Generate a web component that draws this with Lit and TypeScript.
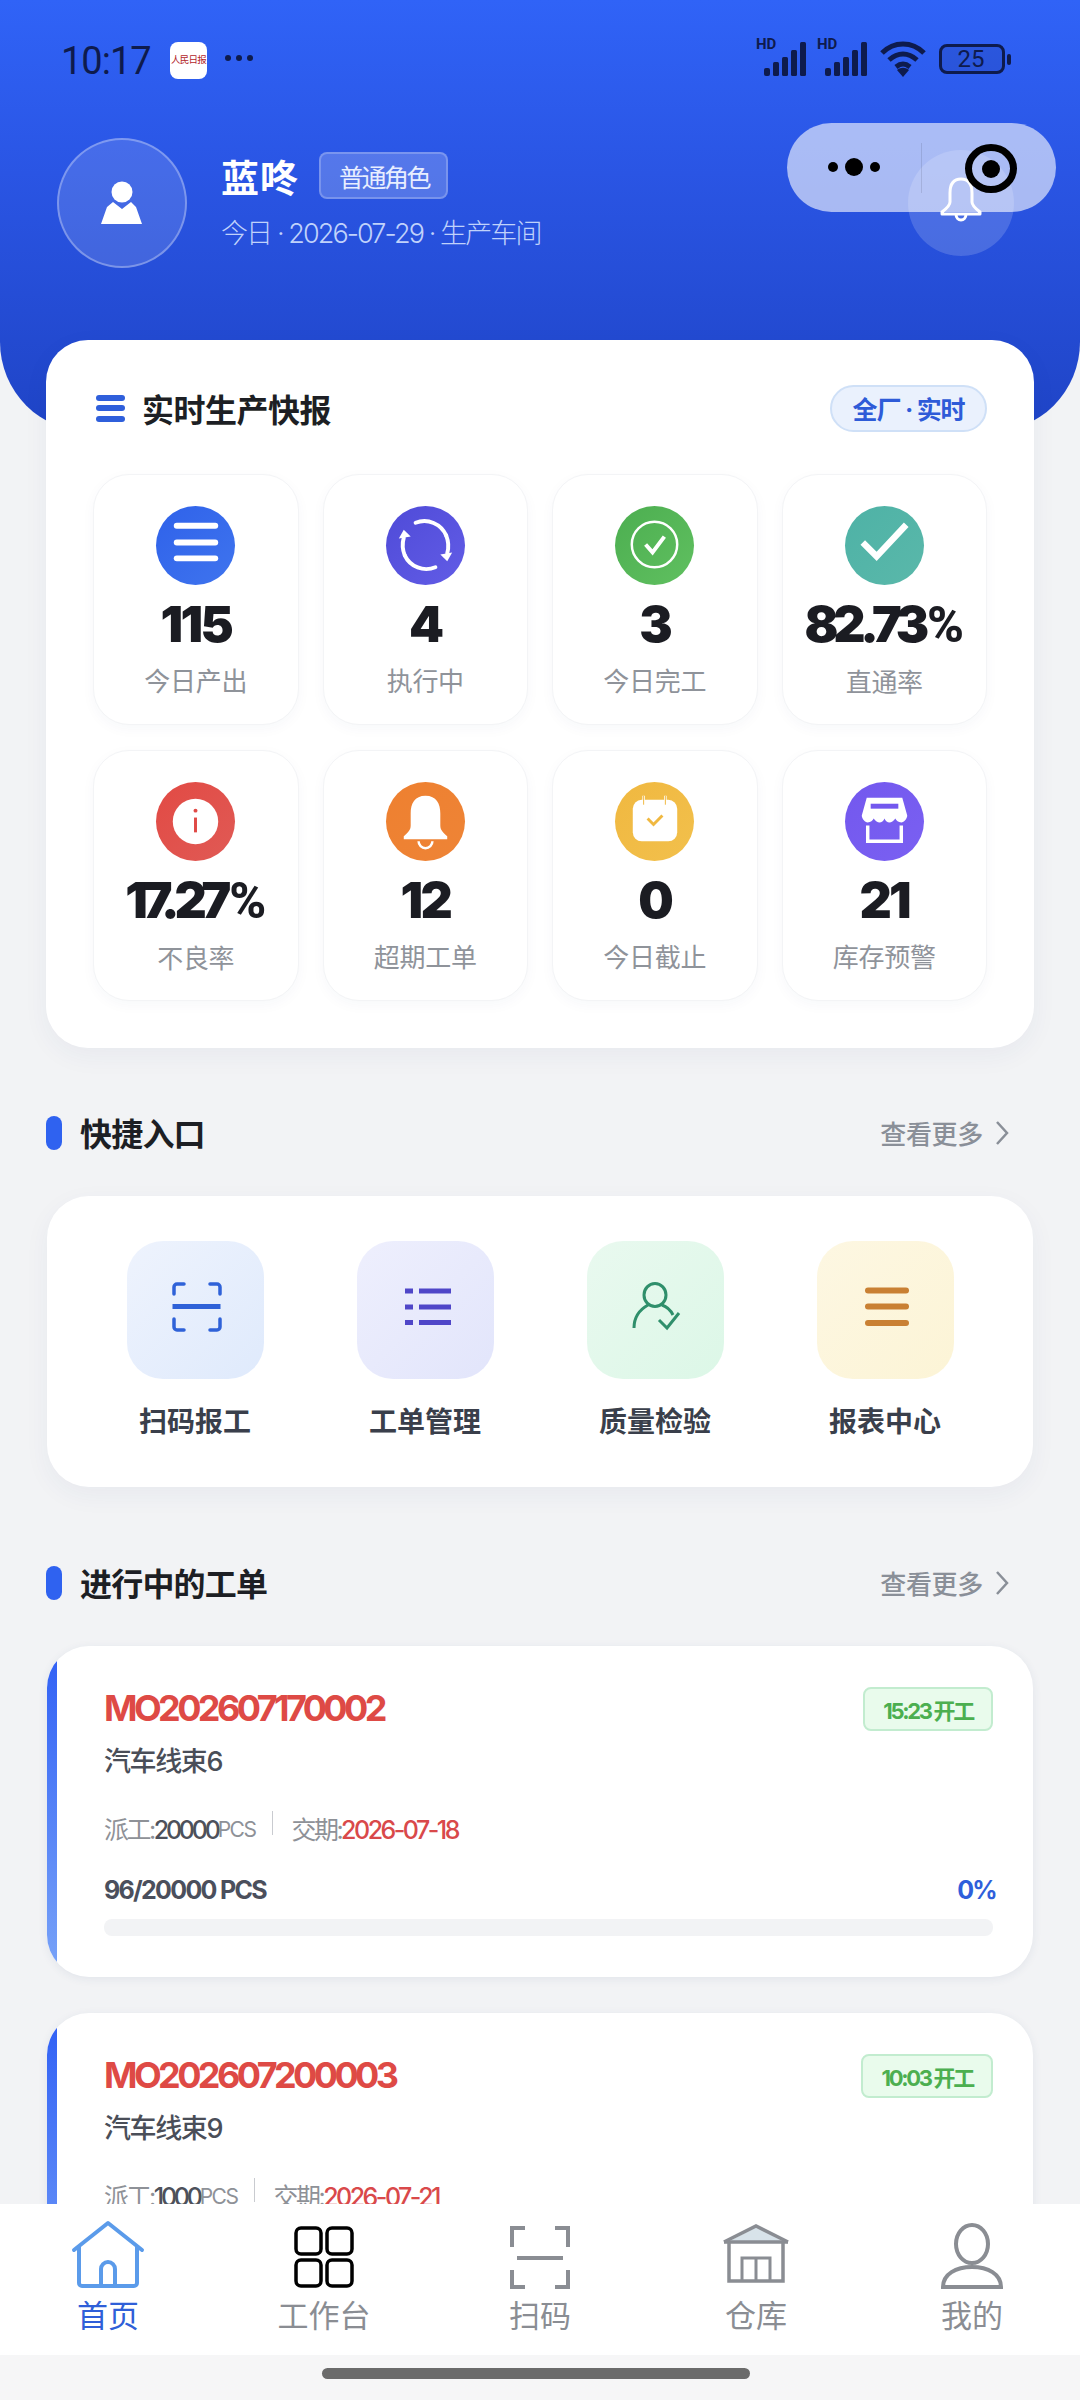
import { LitElement, html, css, svg } from "lit";
import { customElement } from "lit/decorators.js";

const W = (inner: unknown) => html`<svg class="ic" viewBox="0 0 80 80">${inner}</svg>`;

const metrics = [
  { v: "115", l: "今日产出", bg: "linear-gradient(135deg,#2f62ea,#3f74ee)", i: W(svg`<g fill="#fff"><rect x="18" y="17" width="45" height="6" rx="3"/><rect x="18" y="34" width="45" height="6" rx="3"/><rect x="18" y="50" width="45" height="6" rx="3"/></g>`) },
  { v: "4", l: "执行中", bg: "linear-gradient(135deg,#4f4bd8,#625ce6)", i: W(svg`<g fill="none" stroke="#fff" stroke-width="4" stroke-linecap="round"><path d="M30 17A24 24 0 0 1 61 30"/><path d="M50 62A24 24 0 0 1 19 50"/><path d="M18 32C16 39 17 45 19 50" /><path d="M62 48C64 41 63 35 61 30"/></g><g fill="#fff"><path d="M13 33l5-9 7 7z"/><path d="M67 47l-5 9-7-7z"/></g>`) },
  { v: "3", l: "今日完工", bg: "linear-gradient(135deg,#4cae50,#60c060)", i: W(svg`<circle cx="40" cy="39" r="23" fill="none" stroke="#fff" stroke-width="2.5"/><path d="M31 39l7 8 12-16" fill="none" stroke="#fff" stroke-width="4"/>`) },
  { v: "82.73%", l: "直通率", bg: "linear-gradient(135deg,#4eb2a6,#5ab8aa)", i: W(svg`<path d="M18 37l14 14 30-32" fill="none" stroke="#fff" stroke-width="6.5"/>`) },
  { v: "17.27%", l: "不良率", bg: "linear-gradient(135deg,#e24a44,#e05a55)", i: W(svg`<circle cx="40" cy="40" r="23" fill="#fff"/><rect x="38.500" y="36" width="3" height="15" fill="#e04a46"/><circle cx="40" cy="29" r="2" fill="#e04a46"/>`) },
  { v: "12", l: "超期工单", bg: "linear-gradient(135deg,#ee8030,#ee8436)", i: W(svg`<path fill="#fff" d="M40 14c-11 0-15 8-15 18v12c0 5-3 7-7 11v3h44v-3c-4-4-7-6-7-11V32c0-10-4-18-15-18z"/><path fill="none" stroke="#fff" stroke-width="2.5" d="M33 60a7 7 0 0 0 14 0"/>`) },
  { v: "0", l: "今日截止", bg: "linear-gradient(135deg,#f0b840,#f2c04c)", i: W(svg`<rect x="18" y="18" width="45" height="42" rx="9" fill="#fff"/><path d="M29 14v9M51 14v9" stroke="#fff" stroke-width="2.5"/><path d="M29 14v9M51 14v9" stroke="#f0b840" stroke-width="1" /><path d="M33 37l6 6 9-9" fill="none" stroke="#f0b840" stroke-width="3"/>`) },
  { v: "21", l: "库存预警", bg: "linear-gradient(135deg,#7358ee,#7a60f2)", i: W(svg`<path fill="none" stroke="#fff" stroke-width="3.5" d="M23 44v16h34V44"/><path fill="#fff" d="M22 16h36l5 18c0 3-3 7-6 7-3 0-5-2-6-4-2 3-4 4-6 4s-4-1-5-4c-1 3-3 4-5 4s-4-1-6-4c-1 2-3 4-6 4-3 0-6-4-6-7z"/><rect x="26" y="22" width="28" height="5" fill="#7358ee"/>`) },
];

const T = (inner: unknown) => html`<svg class="qic" viewBox="0 0 137 138">${inner}</svg>`;
const quick = [
  { l: "扫码报工", bg: "linear-gradient(135deg,#eef3fd,#dfeafc)", i: T(svg`<g fill="none" stroke="#2f62d8" stroke-width="3.5" stroke-linecap="round"><path d="M47 53v-7a3 3 0 0 1 3-3h7M83 43h7a3 3 0 0 1 3 3v7M47 78v8a3 3 0 0 0 3 3h7M83 89h7a3 3 0 0 0 3-3v-8"/></g><rect x="45.500" y="63" width="48" height="5" fill="#2f62d8"/>`) },
  { l: "工单管理", bg: "linear-gradient(135deg,#eeeffd,#e2e5fb)", i: T(svg`<g fill="#4f46c8"><rect x="48" y="47.500" width="8" height="5"/><rect x="62" y="47.500" width="32" height="5"/><rect x="48" y="63.500" width="8" height="5"/><rect x="62" y="63.500" width="32" height="5"/><rect x="48" y="79" width="8" height="5"/><rect x="62" y="79" width="32" height="5"/></g>`) },
  { l: "质量检验", bg: "linear-gradient(135deg,#e9f9ef,#dcf7e7)", i: T(svg`<g fill="none" stroke="#2f8f6b" stroke-width="3"><ellipse cx="68" cy="54" rx="11" ry="11.500"/><path d="M47 87c0-10 5-18 14-23M75 64c6 2 9 6 11 10"/><path d="M72 79l8 8 12-15"/></g>`) },
  { l: "报表中心", bg: "linear-gradient(135deg,#fdf7e2,#fcf4d6)", i: T(svg`<g fill="#c98033"><rect x="48" y="46.500" width="44" height="6" rx="3"/><rect x="48" y="62.500" width="44" height="6" rx="3"/><rect x="48" y="79" width="44" height="6" rx="3"/></g>`) },
];

const orders = [
  { no: "MO202607170002", name: "汽车线束6", tag: "15:23 开工", qty: "20000", due: "2026-07-18", prog: "96/20000 PCS", pct: "0%" },
  { no: "MO202607200003", name: "汽车线束9", tag: "10:03 开工", qty: "1000", due: "2026-07-21", prog: "", pct: "0%" },
];

const N = (inner: unknown) => html`<svg class="nic" viewBox="0 0 100 72">${inner}</svg>`;
const nav = [
  { l: "首页", on: true, i: N(svg`<g fill="none" stroke="#5b9bea" stroke-width="4" stroke-linejoin="round" stroke-linecap="round"><path d="M16 30L50 3L84 30"/><path d="M21 27v36a3 3 0 0 0 3 3h52a3 3 0 0 0 3-3V27"/><path d="M43 66V49a7 7 0 0 1 14 0v17"/></g>`) },
  { l: "工作台", on: false, i: N(svg`<g fill="none" stroke="#000" stroke-width="3.5"><rect x="22" y="8" width="25" height="26" rx="5"/><rect x="53" y="8" width="25" height="26" rx="5"/><rect x="22" y="40" width="25" height="26" rx="5"/><rect x="53" y="40" width="25" height="26" rx="5"/></g>`) },
  { l: "扫码", on: false, i: N(svg`<g fill="none" stroke="#8a8d93" stroke-width="4"><path d="M22 27V8h13M65 8h13v19M22 50v17h13M65 67h13V50"/><path d="M27 38h46"/></g>`) },
  { l: "仓库", on: false, i: N(svg`<path d="M24 21L50 7l26 14" fill="#d8e3ea"/><g fill="none" stroke="#8a8d93" stroke-width="3.500"><path d="M18 22L50 6l32 16"/><path d="M18 22h64"/><path d="M23 22v39h54V22"/><path d="M36 61V38h28v23M50 38v23" stroke-width="3"/></g>`) },
  { l: "我的", on: false, i: N(svg`<g fill="none" stroke="#8a8d93" stroke-width="4"><ellipse cx="50" cy="24" rx="16" ry="19"/><path d="M21 67c0-13 13-20 29-20s29 7 29 20z"/></g>`) },
];

const Signal = () => html`<span class="sig"><i>HD</i><svg viewBox="0 0 48 34" width="48" height="34"><g fill="#0e1b4d"><rect x="0" y="26" width="6" height="8" rx="2"/><rect x="9" y="20" width="6" height="14" rx="1.500"/><rect x="18" y="15" width="6" height="19" rx="1.500"/><rect x="27" y="8" width="6" height="26" rx="1.500"/><rect x="36" y="0" width="6" height="34" rx="1.500"/></g></svg></span>`;

@customElement("app-root")
export class AppRoot extends LitElement {
  static styles = css`
    :host { display: block; width: 1080px; height: 2400px; position: relative; overflow: hidden; background: #f2f3f5;
      font-family: Inter, "Noto Sans CJK SC", sans-serif; color: #1c1f26; }
    * { box-sizing: border-box; }
    svg { display: block; }
    .hero { height: 432px; background: linear-gradient(180deg,#3063f7 0%,#2a55e4 40%,#1f44c6 100%); border-radius: 0 0 90px 90px; }
    .status { height: 124px; padding: 38px 18px 0 61px; display: flex; align-items: flex-start; color: #0e1b4d; }
    .time { font: 400 38px/46px Roboto, sans-serif; width: 109px; letter-spacing: -1px; }
    .logo { width: 37px; height: 37px; margin-top: 4px; background: #fff; border-radius: 8px; color: #b3262a; font: 400 9.500px/35px "Noto Sans CJK SC", serif; text-align: center; white-space: nowrap; overflow: hidden; letter-spacing: -.8px; }
    .more { margin: 8px 0 0 18px; display: flex; gap: 5px; padding-top: 9px; }
    .more i { width: 6px; height: 6px; border-radius: 50%; background: #0e1b4d; }
    .sbr { margin-left: auto; display: flex; align-items: center; gap: 13px; padding-top: 2px; margin-right: 57px; }
    .sig { position: relative; display: block; width: 48px; height: 34px; }
    .sig svg { margin-left: 6px; }
    .sig i { position: absolute; left: -2px; top: -5px; font: 700 15px/15px Roboto, sans-serif; font-style: normal; }
    .batt { width: 66px; height: 30px; border: 3px solid #0e1b4d; border-radius: 8px; font: 400 24px/24px Roboto, sans-serif; text-align: center; position: relative; padding-right: 2px; background: rgba(14,27,77,.12); }
    .batt:after { content: ""; position: absolute; right: -9px; top: 7px; width: 4px; height: 11px; background: #0e1b4d; border-radius: 2px; }
    .profile { display: flex; padding-left: 57px; align-items: center; height: 130px; margin-top: 14px; }
    .avatar { width: 130px; height: 130px; border-radius: 50%; background: rgba(255,255,255,.13); border: 2px solid rgba(255,255,255,.3); display: flex; align-items: center; justify-content: center; margin-right: 35px; }
    .who { display: flex; flex-direction: column; gap: 12px; color: #fff; margin-top: -4px; }
    .nameRow { display: flex; align-items: center; gap: 20px; height: 48px; }
    .name { font-size: 38px; font-weight: 700; letter-spacing: 1px; margin-left: -1px; }
    .role { height: 47px; padding: 0 17px 0 18px; display: flex; align-items: center; font-size: 25px; border: 2px solid rgba(255,255,255,.22); background: rgba(255,255,255,.2); border-radius: 8px; color: #e8eeff; letter-spacing: -2.500px; }
    .sub { font-size: 27px; color: #c0d2fb; letter-spacing: -1.900px; font-weight: 300; margin-left: -1px; }
    .bell { position: absolute; left: 908px; top: 150px; width: 106px; height: 106px; border-radius: 50%; background: rgba(255,255,255,.16); display: flex; align-items: center; justify-content: center; padding-bottom: 8px; }
    .capsule { position: absolute; left: 787px; top: 123px; width: 269px; height: 89px; border-radius: 45px; background: rgba(255,255,255,.6); display: flex; align-items: center; }
    .caps-dots { width: 134px; display: flex; justify-content: center; align-items: center; gap: 7px; margin-top: -2px; }
    .caps-dots i { border-radius: 50%; background: #000; width: 10px; height: 10px; }
    .caps-dots i.mid { width: 18px; height: 18px; }
    .caps-div { width: 1px; height: 50px; background: rgba(0,0,0,.1); }
    .target { position: absolute; left: 178px; top: 21px; width: 52px; height: 49px; border: 7px solid #000; border-radius: 50%; display: flex; align-items: center; justify-content: center; }
    .target i { width: 18px; height: 18px; border-radius: 50%; background: #000; }

    main { margin-top: -92px; padding: 0 46px 0 46px; display: flex; flex-direction: column; }
    .panel { background: #fff; border-radius: 42px; box-shadow: 0 8px 26px rgba(40,60,110,.05); }
    .stats { height: 708px; padding: 46px 47px 0; }
    .shead { display: flex; align-items: center; height: 44px; }
    .menu { width: 29px; height: 27px; margin-left: 3px; display: flex; flex-direction: column; justify-content: space-between; margin-right: 17px; }
    .menu i { height: 6px; background: #2f5fdb; border-radius: 3px; }
    .stitle { font-size: 32px; font-weight: 700; color: #1d1f24; letter-spacing: -.5px; }
    .pill { margin-left: auto; height: 47px; width: 157px; border: 2px solid #cfe0f7; background: #eaf1fd; color: #2e5bd8; border-radius: 24px; font-size: 25px; font-weight: 700; display: flex; align-items: center; justify-content: center; letter-spacing: -1.200px; }
    .grid { margin-top: 44px; display: grid; grid-template-columns: repeat(4, 1fr); gap: 25px 24px; }
    .m { height: 251px; border-radius: 36px; background: #fff; border: 1px solid #f3f4f6; box-shadow: 0 4px 14px rgba(40,60,110,.035); display: flex; flex-direction: column; align-items: center; padding-top: 31px; }
    .circ { width: 79px; height: 79px; border-radius: 50%; }
    .ic { width: 79px; height: 79px; }
    .num { font-family: Inter, sans-serif; font-weight: 900; font-size: 50px; line-height: 60px; margin-top: 9px; letter-spacing: -2.600px; color: #1b1c22; white-space: nowrap; }
    .num.long { letter-spacing: -5.200px; }
    .num .p { font-family: Roboto, sans-serif; font-weight: 800; letter-spacing: 0; margin-left: 3px; }
    .lab { font-size: 26px; line-height: 36px; margin-top: 10px; color: #8f939a; letter-spacing: -.3px; }

    .sec { display: flex; align-items: center; height: 44px; }
    .sec b { width: 16px; height: 34px; border-radius: 8px; background: #2f62f0; margin-right: 18px; }
    .sec span, .sec em { margin-top: -2px; }
    .sec span { font-size: 32px; font-weight: 700; color: #1d1f24; letter-spacing: -.8px; }
    .sec em { margin-left: auto; margin-right: 12px; font-style: normal; font-size: 26px; font-weight: 500; color: #8a8f98; letter-spacing: -.3px; }
    .sec svg { margin-right: 25px; }
    .s1 { margin-top: 63px; }
    .quick { margin-top: 41px; height: 291px; margin-left: 1px; margin-right: 1px; display: grid; grid-template-columns: repeat(4, 230px); justify-content: center; padding-top: 45px; }
    .q { display: flex; flex-direction: column; align-items: center; }
    .tile { width: 137px; height: 138px; border-radius: 36px; }
    .qic { width: 137px; height: 138px; }
    .ql { margin-top: 24px; font-size: 28px; line-height: 38px; font-weight: 600; color: #3a3f4b; }
    .s2 { margin-top: 74px; }
    .orders { margin-top: 41px; display: flex; flex-direction: column; gap: 36px; }
    .o { margin: 0 1px; height: 331px; flex: none; position: relative; background: #fff; border-radius: 42px; overflow: hidden; box-shadow: 0 2px 10px rgba(40,60,110,.08); padding: 37px 40px 0 57px; }
    .stripe { position: absolute; left: 0; top: 0; bottom: 0; width: 10px; background: linear-gradient(180deg,#2f5ff5,#7aa4f8); }
    .orow { display: flex; align-items: flex-start; justify-content: space-between; }
    .no { font-size: 36px; line-height: 46px; font-weight: 700; color: #de4a45; letter-spacing: -3.600px; margin-top: 2px; }
    .tag { height: 44px; padding: 0 18px; display: flex; align-items: center; background: #e9fbec; border: 2px solid #c2eccf; border-radius: 8px; color: #4caf50; font-size: 22px; font-weight: 700; letter-spacing: -2.300px; margin-top: 4px; white-space: nowrap; }
    .oname { margin-top: 13px; font-size: 27px; line-height: 36px; font-weight: 500; color: #4a4e58; letter-spacing: -1.400px; }
    .meta { margin-top: 32px; display: flex; align-items: center; font-size: 25px; line-height: 36px; color: #8e9197; letter-spacing: -2.500px; white-space: nowrap; }
    .meta b { font-weight: 500; color: #4d515b; letter-spacing: -3.200px; }
    .meta small { font-size: 21px; color: #8e9197; letter-spacing: -1.500px; }
    .meta u { text-decoration: none; color: #d9494a; font-weight: 500; }
    .sep { width: 1px; height: 24px; background: #c9cbd0; margin: -14px 18px 0 17px; }
    .prow { margin-top: 24px; display: flex; justify-content: space-between; font-size: 25px; line-height: 36px; font-weight: 700; color: #4b4f5c; letter-spacing: -1.700px; }
    .prow span:last-child { color: #2f5fdb; margin-right: -3px; }
    .track { margin-top: 11px; height: 17px; border-radius: 8px; background: #f2f3f5; }

    .foot { position: absolute; left: 0; right: 0; bottom: 0; height: 196px; background: #f6f6f7; }
    .tabs { height: 151px; background: #fff; display: grid; grid-template-columns: repeat(5, 216px); }
    .t { display: flex; flex-direction: column; align-items: center; padding-top: 16px; font-size: 31px; line-height: 40px; color: #8a8d93; }
    .t.on { color: #2f5fd8; }
    .nic { width: 100px; height: 72px; margin-bottom: 4px; }
    .handle { position: absolute; left: 322px; top: 164px; width: 428px; height: 11px; border-radius: 6px; background: #6b6b6b; }
  `;

  render() {
    return html`
      <section class="hero">
        <div class="status">
          <span class="time">10:17</span>
          <span class="logo">人民日报</span>
          <span class="more"><i></i><i></i><i></i></span>
          <span class="sbr">
            ${Signal()}${Signal()}
            <svg width="46" height="38" viewBox="0 0 46 38"><g fill="none" stroke="#0e1b4d" stroke-width="5"><path d="M2 13C14 1 32 1 44 13"/><path d="M9 20c9-8 19-8 28 0"/><path d="M16 27c5-4 9-4 14 0"/></g><path d="M17 30c4-3 8-3 12 0l-6 7z" fill="#0e1b4d"/></svg>
            <span class="batt">25</span>
          </span>
        </div>
        <div class="profile">
          <div class="avatar">
            <svg width="44" height="44" viewBox="0 0 44 44"><circle cx="22" cy="11" r="10.500" fill="#fff"/><path fill="#fff" d="M13 21l9 7 9-7 5 5 6 17H1l6-17z"/></svg>
          </div>
          <div class="who">
            <div class="nameRow"><span class="name">蓝咚</span><span class="role">普通角色</span></div>
            <div class="sub">今日 · 2026-07-29 · 生产车间</div>
          </div>
        </div>
      </section>

      <main>
        <section class="panel stats">
          <div class="shead">
            <span class="menu"><i></i><i></i><i></i></span>
            <span class="stitle">实时生产快报</span>
            <span class="pill">全厂 · 实时</span>
          </div>
          <div class="grid">
            ${metrics.map(m => {
              const isPct = m.v.endsWith("%");
              return html`<div class="m">
              <div class="circ" style="background:${m.bg}">${m.i}</div>
              <div class="num ${isPct ? "long" : ""}">${isPct ? html`${m.v.slice(0, -1)}<span class="p">%</span>` : m.v}</div>
              <div class="lab">${m.l}</div>
            </div>`;
            })}
          </div>
        </section>

        <div class="sec s1"><b></b><span>快捷入口</span><em>查看更多</em>${this.chev()}</div>
        <section class="panel quick">
          ${quick.map(q => html`<div class="q"><div class="tile" style="background:${q.bg}">${q.i}</div><div class="ql">${q.l}</div></div>`)}
        </section>

        <div class="sec s2"><b></b><span>进行中的工单</span><em>查看更多</em>${this.chev()}</div>
        <section class="orders">
          ${orders.map(o => html`<article class="o">
            <div class="stripe"></div>
            <div class="orow"><span class="no">${o.no}</span><span class="tag">${o.tag}</span></div>
            <div class="oname">${o.name}</div>
            <div class="meta">派工:<b>${o.qty}</b><small>PCS</small><i class="sep"></i>交期:<u>${o.due}</u></div>
            <div class="prow"><span>${o.prog}</span><span>${o.pct}</span></div>
            <div class="track"></div>
          </article>`)}
        </section>
      </main>

      <div class="bell">
        <svg width="42" height="45" viewBox="0 0 42 45"><g fill="none" stroke="#fff" stroke-width="3" stroke-linejoin="round"><path d="M21 2c-8 0-11 6-11 14v9c0 4-4 7-8 10v2h38v-2c-4-3-8-6-8-10v-9C32 8 29 2 21 2z"/><path d="M16 37c0 8 10 8 10 0"/></g></svg>
      </div>
      <div class="capsule">
        <div class="caps-dots"><i></i><i class="mid"></i><i></i></div>
        <div class="caps-div"></div>
        <div class="target"><i></i></div>
      </div>

      <footer class="foot">
        <div class="tabs">
          ${nav.map(n => html`<div class="t ${n.on ? "on" : ""}">${n.i}<span>${n.l}</span></div>`)}
        </div>
        <div class="handle"></div>
      </footer>
    `;
  }

  chev() {
    return html`<svg width="14" height="26" viewBox="0 0 14 26"><path d="M2 2l10 11L2 24" fill="none" stroke="#8a8f98" stroke-width="2.500"/></svg>`;
  }
}
